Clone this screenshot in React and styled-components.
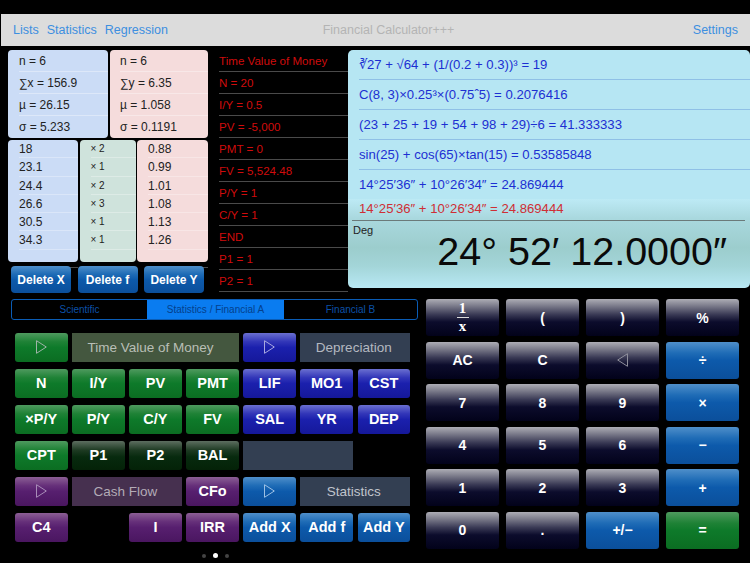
import React from "react";
import styled, { createGlobalStyle, css } from "styled-components";

const GlobalStyle = createGlobalStyle`
  html, body {
    margin: 0;
    padding: 0;
    background: #000;
    font-family: "Liberation Sans", Arial, sans-serif;
  }
`;

const tones = {
  green: css`
    background: linear-gradient(#4f9a5f 0%, #1f8236 30%, #0e7a2a 50%, #0b6d22 100%);
  `,
  indigo: css`
    background: linear-gradient(#6a6fd0 0%, #3236b8 30%, #1b20ad 50%, #15189a 100%);
  `,
  purple: css`
    background: linear-gradient(#8c5f95 0%, #66307a 30%, #571f6f 50%, #4a1660 100%);
  `,
  steel: css`
    background: linear-gradient(#4f8fca 0%, #1f6cb6 30%, #0d5aab 50%, #0b4f9b 100%);
  `,
  dark: css`
    background: linear-gradient(#5d6e60 0%, #1d3a22 32%, #072a0e 55%, #042208 100%);
  `,
  key: css`
    background: linear-gradient(#adadb5 0%, #7d7d8c 18%, #3a3a55 42%, #0c0c2c 62%, #02021a 100%);
  `,
};

const Page = styled.div`
  width: 750px;
  height: 563px;
  padding-top: 14px;
  box-sizing: border-box;
  overflow: hidden;
  background: #000;
  display: flex;
  flex-direction: column;
`;

const NavBar = styled.div`
  height: 32px;
  margin-left: 1px;
  padding: 0 12px;
  background: #dcdcdc;
  display: grid;
  grid-template-columns: 1fr auto 1fr;
  align-items: center;
  font-size: 12.5px;
`;

const NavLinks = styled.div`
  display: flex;
  gap: 8px;
`;

const NavLink = styled.span`
  color: #3d8fe0;
`;

const NavTitle = styled.span`
  color: #b4b4b4;
  font-size: 12.5px;
  padding-left: 26px;
`;

const NavRight = styled(NavLinks)`
  justify-content: flex-end;
`;

const Upper = styled.div`
  display: flex;
  padding: 4px 0 0 8px;
  height: 249px;
  box-sizing: border-box;
`;

const StatsColumn = styled.div`
  width: 200px;
  display: flex;
  flex-direction: column;
`;

const SummaryRow = styled.div`
  display: flex;
  gap: 2px;
`;

const ListsRow = styled.div`
  display: flex;
  gap: 1.5px;
  margin-top: 2px;
`;

const panelColors = { x: "#cbdcf6", y: "#f5dcdc", f: "#cfe3dc" };

const StatPanel = styled.div`
  background: ${(p) => panelColors[p.$kind]};
  border-radius: 4px;
  box-sizing: border-box;
  width: ${(p) => p.$width}px;
  height: ${(p) => p.$height}px;
  padding-left: ${(p) => p.$indent}px;
  color: #222;
`;

const SummaryCell = styled.div`
  height: 22px;
  line-height: 22px;
  font-size: 12px;
  border-bottom: 1px solid rgba(255, 255, 255, 0.35);
  box-sizing: border-box;
  &:last-child {
    border-bottom: none;
  }
`;

const ListCell = styled.div`
  height: 18.3px;
  line-height: 18.3px;
  font-size: ${(p) => (p.$small ? "10px" : "12px")};
  border-bottom: 1px solid rgba(255, 255, 255, 0.3);
  box-sizing: border-box;
`;

const DeleteRow = styled.div`
  display: flex;
  gap: 6.5px;
  margin: 4px 0 0 3px;
`;

const DeleteButton = styled.div`
  ${tones.steel}
  width: 60px;
  height: 27px;
  border-radius: 4px;
  color: #fff;
  font-size: 12px;
  font-weight: bold;
  display: flex;
  align-items: center;
  justify-content: center;
`;

const TvmList = styled.div`
  width: 129px;
  margin-left: 11px;
  flex: none;
`;

const TvmRow = styled.div`
  height: 22px;
  line-height: 22px;
  color: #d00c0c;
  font-size: 11.6px;
  border-bottom: 1px solid #4a4a4a;
  box-sizing: border-box;
  white-space: nowrap;
`;

const CalcColumn = styled.div`
  flex: 1;
  display: flex;
  flex-direction: column;
  height: 238px;
`;

const HistoryPanel = styled.div`
  background: #b6e6f3;
  border-radius: 5px 5px 0 0;
  height: 149px;
  padding-left: 11px;
`;

const HistoryRow = styled.div`
  height: 30px;
  line-height: 29px;
  color: #1c2fd2;
  font-size: 13.15px;
  border-bottom: 1px solid #8fc0e6;
  box-sizing: border-box;
  white-space: nowrap;
`;

const Display = styled.div`
  height: 89px;
  padding: 0 5px 0 4px;
  border-radius: 0 0 5px 5px;
  background: linear-gradient(#bdeaf5 0%, #a9d8de 22%, #9ccdcd 55%, #a3d5d8 75%, #b8e8f4 100%);
  display: flex;
  flex-direction: column;
`;

const LastExpression = styled.div`
  height: 22px;
  line-height: 20px;
  padding-left: 7px;
  color: #cf2e35;
  font-size: 13.15px;
  border-bottom: 1px solid #6b7a7a;
  box-sizing: border-box;
  white-space: nowrap;
`;

const DisplayBody = styled.div`
  position: relative;
  flex: 1;
  text-align: right;
  padding-right: 18px;
`;

const ModeLabel = styled.span`
  position: absolute;
  left: 1px;
  top: 3px;
  font-size: 11px;
  color: #222;
`;

const Readout = styled.div`
  font-size: 39.5px;
  line-height: 60px;
  color: #0a0a0a;
  white-space: nowrap;
`;

const Lower = styled.div`
  display: flex;
  padding-left: 11px;
  margin-top: 4px;
`;

const LeftPane = styled.div`
  width: 407px;
  flex: none;
`;

const Segments = styled.div`
  height: 21px;
  border: 1px solid #0a5cb5;
  border-radius: 3px;
  box-sizing: border-box;
  display: grid;
  grid-template-columns: 135px 137px 1fr;
`;

const Segment = styled.div`
  background: ${(p) => (p.$active ? "#0a7cf0" : "transparent")};
  color: ${(p) => (p.$active ? "#04408c" : "#0b50a8")};
  font-size: 10px;
  display: flex;
  align-items: center;
  justify-content: center;
`;

const FuncGrid = styled.div`
  display: grid;
  grid-template-columns: repeat(7, 52.5px);
  grid-auto-rows: 29px;
  column-gap: 4.6px;
  row-gap: 7px;
  margin: 13px 0 0 4px;
`;

const FuncButton = styled.div`
  ${(p) => tones[p.$tone]}
  border-radius: 3px;
  color: #fff;
  font-size: 14.5px;
  font-weight: bold;
  padding-bottom: 1px;
  box-sizing: border-box;
  display: flex;
  align-items: center;
  justify-content: center;
  white-space: nowrap;
`;

const GroupLabel = styled.div`
  grid-column: span ${(p) => p.$span};
  background: ${(p) => p.$bg};
  color: ${(p) => p.$fg};
  font-size: 13.5px;
  padding-right: ${(p) => p.$shift || 3}px;
  display: flex;
  align-items: center;
  justify-content: center;
`;

const Gap = styled.div`
  grid-column: span ${(p) => p.$span || 1};
`;

const PageDots = styled.div`
  display: flex;
  justify-content: center;
  align-items: center;
  gap: 7px;
  margin: 11px 0 0 2px;
`;

const Dot = styled.span`
  width: ${(p) => (p.$on ? 5 : 4)}px;
  height: ${(p) => (p.$on ? 5 : 4)}px;
  border-radius: 50%;
  background: ${(p) => (p.$on ? "#fff" : "#444")};
`;

const Keypad = styled.div`
  margin-left: 8px;
  display: grid;
  grid-template-columns: repeat(4, 73px);
  grid-auto-rows: 37px;
  column-gap: 7px;
  row-gap: 5.5px;
`;

const Key = styled.div`
  ${(p) => tones[p.$tone || "key"]}
  border-radius: 3px;
  color: #fff;
  font-size: 14px;
  font-weight: bold;
  display: flex;
  align-items: center;
  justify-content: center;
`;

const Fraction = styled.div`
  display: flex;
  flex-direction: column;
  align-items: center;
  font-family: "Liberation Serif", serif;
  font-size: 15px;
  line-height: 17px;
`;

const FractionBar = styled.span`
  width: 12px;
  height: 1px;
  background: #ddd;
`;

const Triangle = ({ left, color = "#9fb4a8" }) => (
  <svg width="11" height="14" viewBox="0 0 11 14">
    <path
      d={left ? "M10.5 .7V13.3L.7 7Z" : "M.5 .7V13.3L10.3 7Z"}
      fill="none"
      stroke={color}
      strokeWidth="1"
    />
  </svg>
);

const xSummary = ["n = 6", "∑x = 156.9", "µ = 26.15", "σ = 5.233"];
const ySummary = ["n = 6", "∑y = 6.35", "µ = 1.058", "σ = 0.1191"];
const xList = ["18", "23.1", "24.4", "26.6", "30.5", "34.3", ""];
const fList = ["× 2", "× 1", "× 2", "× 3", "× 1", "× 1", ""];
const yList = ["0.88", "0.99", "1.01", "1.08", "1.13", "1.26", ""];
const tvm = [
  "Time Value of Money",
  "N = 20",
  "I/Y = 0.5",
  "PV = -5,000",
  "PMT = 0",
  "FV = 5,524.48",
  "P/Y = 1",
  "C/Y = 1",
  "END",
  "P1 = 1",
  "P2 = 1",
];
const history = [
  "∛27 + √64 + (1/(0.2 + 0.3))³ = 19",
  "C(8, 3)×0.25³×(0.75ˆ5) = 0.2076416",
  "(23 + 25 + 19 + 54 + 98 + 29)÷6 = 41.333333",
  "sin(25) + cos(65)×tan(15) = 0.53585848",
  "14°25′36″ + 10°26′34″ = 24.869444",
];
const keys = [
  { label: <Fraction>1<FractionBar />x</Fraction> },
  { label: "(" },
  { label: ")" },
  { label: "%" },
  { label: "AC" },
  { label: "C" },
  { label: <Triangle left color="#8f8f9c" /> },
  { label: "÷", tone: "steel" },
  { label: "7" },
  { label: "8" },
  { label: "9" },
  { label: "×", tone: "steel" },
  { label: "4" },
  { label: "5" },
  { label: "6" },
  { label: "−", tone: "steel" },
  { label: "1" },
  { label: "2" },
  { label: "3" },
  { label: "+", tone: "steel" },
  { label: "0" },
  { label: "." },
  { label: "+/−", tone: "steel" },
  { label: "=", tone: "green" },
];

const App = () => (
  <Page>
    <GlobalStyle />
    <NavBar>
      <NavLinks>
        <NavLink>Lists</NavLink>
        <NavLink>Statistics</NavLink>
        <NavLink>Regression</NavLink>
      </NavLinks>
      <NavTitle>Financial Calculator+++</NavTitle>
      <NavRight>
        <NavLink>Settings</NavLink>
      </NavRight>
    </NavBar>

    <Upper>
      <StatsColumn>
        <SummaryRow>
          <StatPanel $kind="x" $width={100} $height={88} $indent={11}>
            {xSummary.map((t) => <SummaryCell key={t}>{t}</SummaryCell>)}
          </StatPanel>
          <StatPanel $kind="y" $width={98} $height={88} $indent={10}>
            {ySummary.map((t) => <SummaryCell key={t}>{t}</SummaryCell>)}
          </StatPanel>
        </SummaryRow>
        <ListsRow>
          <StatPanel $kind="x" $width={70} $height={122} $indent={11}>
            {xList.map((t, i) => <ListCell key={i}>{t}</ListCell>)}
          </StatPanel>
          <StatPanel $kind="f" $width={56} $height={122} $indent={11}>
            {fList.map((t, i) => <ListCell key={i} $small>{t}</ListCell>)}
          </StatPanel>
          <StatPanel $kind="y" $width={71} $height={122} $indent={11}>
            {yList.map((t, i) => <ListCell key={i}>{t}</ListCell>)}
          </StatPanel>
        </ListsRow>
        <DeleteRow>
          <DeleteButton>Delete X</DeleteButton>
          <DeleteButton>Delete f</DeleteButton>
          <DeleteButton>Delete Y</DeleteButton>
        </DeleteRow>
      </StatsColumn>

      <TvmList>
        {tvm.map((t) => <TvmRow key={t}>{t}</TvmRow>)}
      </TvmList>

      <CalcColumn>
        <HistoryPanel>
          {history.map((t) => <HistoryRow key={t}>{t}</HistoryRow>)}
        </HistoryPanel>
        <Display>
          <LastExpression>14°25′36″ + 10°26′34″ = 24.869444</LastExpression>
          <DisplayBody>
            <ModeLabel>Deg</ModeLabel>
            <Readout>24° 52′ 12.0000″</Readout>
          </DisplayBody>
        </Display>
      </CalcColumn>
    </Upper>

    <Lower>
      <LeftPane>
        <Segments>
          <Segment>Scientific</Segment>
          <Segment $active>Statistics / Financial A</Segment>
          <Segment>Financial B</Segment>
        </Segments>
        <FuncGrid>
          <FuncButton $tone="green"><Triangle /></FuncButton>
          <GroupLabel $span={3} $bg="#44573f" $fg="#b9bfb6" $shift={10}>Time Value of Money</GroupLabel>
          <FuncButton $tone="indigo"><Triangle color="#a8a8e0" /></FuncButton>
          <GroupLabel $span={2} $bg="#333f52" $fg="#b4b8c0">Depreciation</GroupLabel>

          <FuncButton $tone="green">N</FuncButton>
          <FuncButton $tone="green">I/Y</FuncButton>
          <FuncButton $tone="green">PV</FuncButton>
          <FuncButton $tone="green">PMT</FuncButton>
          <FuncButton $tone="indigo">LIF</FuncButton>
          <FuncButton $tone="indigo">MO1</FuncButton>
          <FuncButton $tone="indigo">CST</FuncButton>

          <FuncButton $tone="green">×P/Y</FuncButton>
          <FuncButton $tone="green">P/Y</FuncButton>
          <FuncButton $tone="green">C/Y</FuncButton>
          <FuncButton $tone="green">FV</FuncButton>
          <FuncButton $tone="indigo">SAL</FuncButton>
          <FuncButton $tone="indigo">YR</FuncButton>
          <FuncButton $tone="indigo">DEP</FuncButton>

          <FuncButton $tone="green">CPT</FuncButton>
          <FuncButton $tone="dark">P1</FuncButton>
          <FuncButton $tone="dark">P2</FuncButton>
          <FuncButton $tone="dark">BAL</FuncButton>
          <GroupLabel $span={2} $bg="#333f52" />
          <Gap />

          <FuncButton $tone="purple"><Triangle color="#a88cb8" /></FuncButton>
          <GroupLabel $span={2} $bg="#46304f" $fg="#b3abb6">Cash Flow</GroupLabel>
          <FuncButton $tone="purple">CFo</FuncButton>
          <FuncButton $tone="steel"><Triangle color="#9cc0e4" /></FuncButton>
          <GroupLabel $span={2} $bg="#333f52" $fg="#c0c4cc">Statistics</GroupLabel>

          <FuncButton $tone="purple">C4</FuncButton>
          <Gap />
          <FuncButton $tone="purple">I</FuncButton>
          <FuncButton $tone="purple">IRR</FuncButton>
          <FuncButton $tone="steel">Add X</FuncButton>
          <FuncButton $tone="steel">Add f</FuncButton>
          <FuncButton $tone="steel">Add Y</FuncButton>
        </FuncGrid>
        <PageDots>
          <Dot />
          <Dot $on />
          <Dot />
        </PageDots>
      </LeftPane>

      <Keypad>
        {keys.map((k, i) => (
          <Key key={i} $tone={k.tone}>{k.label}</Key>
        ))}
      </Keypad>
    </Lower>
  </Page>
);

export default App;
